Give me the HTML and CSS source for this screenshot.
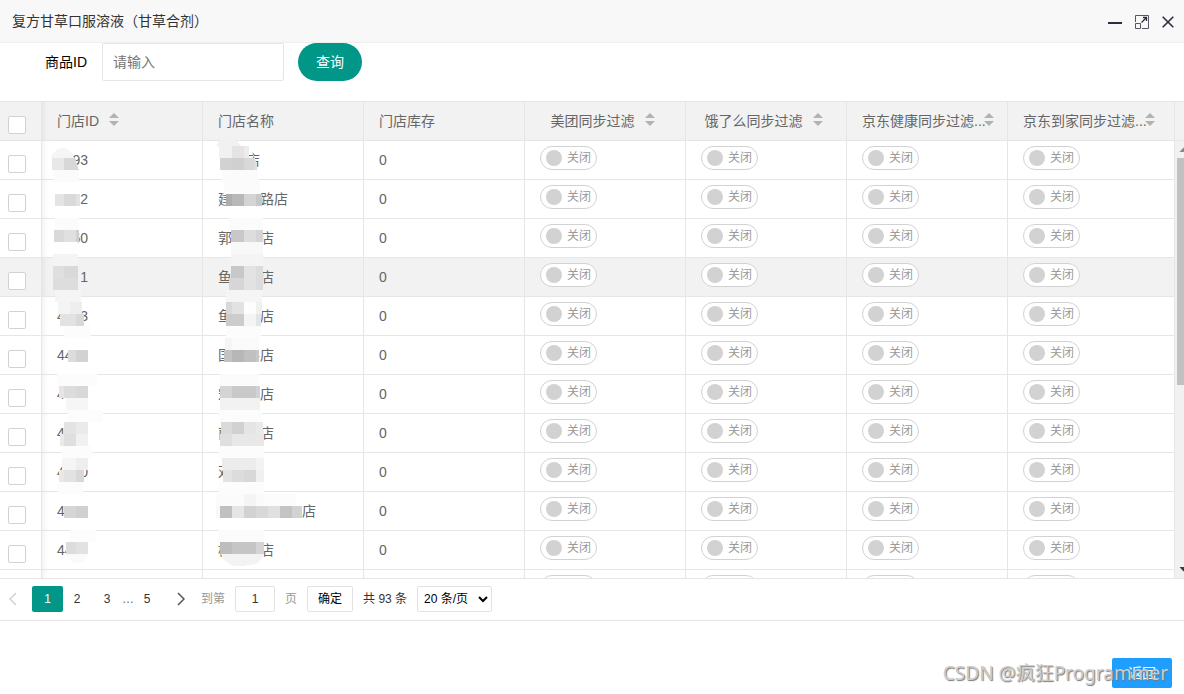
FILE: index.html
```html
<!DOCTYPE html>
<html lang="zh-CN">
<head>
<meta charset="utf-8">
<title>复方甘草口服溶液（甘草合剂）</title>
<link rel="stylesheet" href="styles.css">
</head>
<body>
<header class="titlebar">
  <h1 class="title">复方甘草口服溶液（甘草合剂）</h1>
  <div class="window-actions">
    <button type="button" class="window-btn" aria-label="最小化"><svg width="14" height="14" viewBox="0 0 14 14"><path d="M0 8h14" stroke="#2e2d3c" stroke-width="2"/></svg></button>
    <button type="button" class="window-btn" aria-label="最大化"><svg width="14" height="14" viewBox="0 0 14 14" fill="none" stroke="#2e2d3c"><path d="M.5 7V.5h13v13H7M.5 8.500h5v5h-5z" stroke-opacity=".8"/><path d="M6.500 7.500L11.500 2.500M8 2.500h3.500V6" stroke-width="1.300"/></svg></button>
    <button type="button" class="window-btn" aria-label="关闭"><svg width="12" height="12" viewBox="0 0 12 12"><path d="M.7.7l10.600 10.600M11.300.7L.7 11.300" stroke="#2e2d3c" stroke-width="1.600"/></svg></button>
  </div>
</header>
<form class="search">
  <label class="search-label" for="goods">商品ID</label>
  <input class="search-input" id="goods" type="text" placeholder="请输入">
  <button type="button" class="search-btn">查询</button>
</form>
<main class="grid">
  <table class="table">
    <colgroup><col class="col-check"><col class="col-data"><col class="col-data"><col class="col-data"><col class="col-data"><col class="col-data"><col class="col-data"><col></colgroup>
    <thead>
      <tr>
        <th class="check-cell"><input class="check" type="checkbox" aria-label="全选"></th>
        <th class="first"><span class="head">门店ID<i class="sort"></i></span></th>
        <th><span class="head">门店名称</span></th>
        <th><span class="head">门店库存</span></th>
        <th><span class="head head-center">美团同步过滤<i class="sort"></i></span></th>
        <th><span class="head head-center">饿了么同步过滤<i class="sort"></i></span></th>
        <th><span class="head head-long">京东健康同步过滤...<i class="sort"></i></span></th>
        <th><span class="head head-long">京东到家同步过滤...<i class="sort"></i></span></th>
      </tr>
    </thead>
    <tbody id="rows"></tbody>
  </table>
  <div class="gutter">
    <div class="gutter-head"></div>
    <div class="scrollbar">
      <svg class="arrow" width="17" height="17" viewBox="0 0 17 17"><path d="M4.500 11h8l-4-4.500z" fill="#8a8a8a"/></svg>
      <div class="thumb"></div>
      <svg class="arrow" width="17" height="17" viewBox="0 0 17 17"><path d="M4.500 6h8l-4 4.500z" fill="#404040"/></svg>
    </div>
  </div>
  <svg class="mosaic" id="mosaic" width="340" height="477" viewBox="0 101 340 477" shape-rendering="crispEdges" aria-hidden="true"></svg>
</main>
<nav class="pager" aria-label="分页">
  <a class="page arrow-link"><svg width="8" height="14" viewBox="0 0 8 14"><path d="M7 1L1 7l6 6" fill="none" stroke="#d2d2d2" stroke-width="1.500"/></svg></a>
  <a class="page current" href="#">1</a>
  <a class="page" href="#">2</a>
  <a class="page" href="#">3</a>
  <span class="dots">…</span>
  <a class="page" href="#">5</a>
  <a class="page next" href="#" aria-label="下一页"><svg width="8" height="14" viewBox="0 0 8 14"><path d="M1 1l6 6-6 6" fill="none" stroke="#555" stroke-width="1.500"/></svg></a>
  <label class="muted" for="jump">到第</label>
  <input class="jump" id="jump" type="text" value="1">
  <span class="muted">页</span>
  <button type="button" class="confirm">确定</button>
  <span class="total">共 93 条</span>
  <select class="limit" aria-label="每页条数"><option>20 条/页</option></select>
</nav>
<footer class="footer">
  <button type="button" class="back">返回</button>
  <span class="watermark">CSDN @疯狂Programmer</span>
</footer>
<script src="app.js"></script>
</body>
</html>
```
FILE: styles.css
```css
* { box-sizing: border-box; }
body {
  margin: 0;
  height: 100vh;
  display: flex;
  flex-direction: column;
  overflow: hidden;
  background: #fff;
  color: #333;
  font: 14px/24px "Liberation Sans", "Noto Sans CJK SC", sans-serif;
}
button, input, select { font: inherit; margin: 0; }
a { color: inherit; text-decoration: none; }
.titlebar {
  display: flex;
  align-items: center;
  justify-content: space-between;
  height: 43px;
  padding: 0 10px 0 12px;
  background: #f8f8f8;
  border-bottom: 1px solid #eee;
}
.title { margin: 0; font-size: 14px; font-weight: 400; }
.window-actions { display: flex; align-items: center; gap: 13px; padding-top: 1px; }
.window-btn { display: flex; padding: 0; border: 0; background: none; }
.search { display: flex; align-items: center; padding: 0 0 20px 45px; color: #000; }
.search-label { width: 57px; }
.search-input {
  width: 182px;
  height: 38px;
  padding: 0 10px;
  border: 1px solid #e6e6e6;
  border-radius: 2px;
}
.search-input::placeholder { color: #757575; }
.search-btn {
  height: 38px;
  margin-left: 14px;
  padding: 0 18px;
  border: 0;
  border-radius: 19px;
  background: #009688;
  color: #fff;
}
.grid { position: relative; flex: 1; min-height: 0; display: flex; overflow: hidden; }
.table {
  width: calc(100% - 9px);
  align-self: flex-start;
  table-layout: fixed;
  border-collapse: separate;
  border-spacing: 0;
  color: #666;
}
.col-check { width: 42px; }
.col-data { width: 161px; }
th, td {
  height: 39px;
  padding: 0 15px;
  border-right: 1px solid #e6e6e6;
  border-bottom: 1px solid #e6e6e6;
  font-weight: 400;
  text-align: left;
  white-space: nowrap;
}
th { height: 40px; background: #f2f2f2; border-top: 1px solid #e6e6e6; }
.hover td { background: #f2f2f2; }
.first { box-shadow: inset 6px 0 6px -5px rgba(0, 0, 0, .08); }
.check-cell { padding: 8px 0 0 8px; }
.check {
  appearance: none;
  display: block;
  width: 18px;
  height: 18px;
  border: 1px solid #d2d2d2;
  border-radius: 2px;
  background: #fff;
}
.head { display: flex; align-items: center; gap: 10px; }
.head-center { justify-content: center; padding-right: 5px; }
.head-long { gap: 0; }
.head-long .sort { margin-left: -2px; }
.sort { width: 10px; display: grid; gap: 3px; padding-bottom: 3px; }
.sort::before, .sort::after { content: ""; border: 5px solid transparent; }
.sort::before { border-top: 0; border-bottom-color: #b2b2b2; }
.sort::after { border-bottom: 0; border-top-color: #b2b2b2; }
.switch-cell { padding-bottom: 4px; }
.switch {
  display: flex;
  align-items: center;
  gap: 5px;
  width: 57px;
  height: 24px;
  padding: 0 5px;
  border: 1px solid #d2d2d2;
  border-radius: 12px;
  background: #fff;
  color: #999;
  font-size: 12px;
  line-height: 22px;
}
.switch::before { content: ""; width: 16px; height: 16px; border-radius: 50%; background: #d2d2d2; }
.gutter { width: 9px; display: flex; flex-direction: column; overflow: hidden; }
.gutter-head { height: 40px; background: #f2f2f2; border: solid #e6e6e6; border-width: 1px 0; }
.scrollbar { flex: 1; width: 17px; display: flex; flex-direction: column; background: #f1f1f1; }
.arrow { display: block; flex: none; }
.thumb { height: 56%; max-height: 227px; margin: 0 2px auto; background: #c1c1c1; }
.mosaic { position: absolute; top: 0; left: 0; }
.pager {
  display: flex;
  align-items: center;
  height: 43px;
  padding-bottom: 2px;
  border: solid #e6e6e6;
  border-width: 1px 0;
  font-size: 12px;
}
.page { display: flex; align-items: center; justify-content: center; width: 30px; height: 26px; }
.arrow-link { width: 32px; padding-right: 6px; }
.current { width: 31px; border-radius: 2px; background: #009688; color: #fff; margin-right: -1px; }
.dots { width: 10px; text-align: center; color: #666; }
.next { margin: 0 5px 0 4px; }
.muted { color: #999; }
.jump { width: 40px; height: 26px; margin: 0 10px; padding: 0; border: 1px solid #e2e2e2; border-radius: 2px; text-align: center; color: #333; }
.confirm { height: 26px; margin: 0 10px; padding: 0 10px; border: 1px solid #e2e2e2; border-radius: 2px; background: #fff; color: #000; }
.limit { width: 75px; height: 26px; margin-left: 10px; padding: 0 2px; border: 1px solid #e2e2e2; border-radius: 2px; background: #fff; color: #000; }
.footer { position: relative; display: flex; justify-content: flex-end; padding: 37px 12px 6px; }
.back { width: 60px; height: 30px; padding: 0; border: 0; border-radius: 2px; background: #1e9fff; color: #fff; }
.watermark {
  position: absolute;
  right: 16px;
  bottom: 7px;
  font: 19px/28px "Noto Sans", "Noto Sans CJK SC", sans-serif;
  color: #ccc;
  text-shadow: 1px 1px 1px #777;
}
```
FILE: app.js
```js
// Columns: visible id characters, visible name characters.
const two = "\u00a0\u00a0";
const wide = "\u3000";
const stores = [
  [two + two + "93", wide + wide + "店"],
  [two + two + two + "2", "建" + wide + wide + "路店"],
  [two + two + "60", "郭" + wide + wide + "店"],
  [two + two + two + "1", "鱼" + wide + wide + "店"],
  ["4" + two + two + "3", "鱼" + wide + wide + "店"],
  ["44", "国" + wide + "路店"],
  ["4", "宋" + wide + wide + "店"],
  ["4", "南" + wide + wide + "店"],
  ["4" + two + two + "0", "邓"],
  ["4", wide.repeat(6) + "店"],
  ["44", "杨" + wide + wide + "店"],
  ["", ""]
];
const toggle = '<td class="switch-cell"><button type="button" class="switch" role="switch" aria-checked="false">关闭</button></td>';
document.getElementById("rows").innerHTML = stores.map(([id, name], i) =>
  `<tr class="${i === 3 ? "hover" : ""}"><td class="check-cell"><input class="check" type="checkbox" aria-label="选择"></td>` +
  `<td class="first">${id}</td><td>${name}</td><td>${i < 11 ? "0" : ""}</td>${toggle.repeat(4)}</tr>`).join("");

// Pixelated bands over the private values: top, height, left, then [right, gray] steps.
const bands = [
  [158,12,52,64,"e8",75,"d8"],[170,12,54,79,"fb"],
  [194,12,55,64,"e4",76,"d9",80,"e2"],[218,12,55,79,"fb"],
  [230,12,54,64,"d9",76,"e0",79,"d0"],[242,12,54,78,"fe"],[254,12,53,78,"f4"],
  [266,12,53,64,"df",78,"d9"],[278,12,53,78,"dd"],[290,12,55,81,"f5"],
  [302,12,58,70,"f4",82,"ee"],[314,12,60,76,"e2",84,"d9"],[326,12,64,91,"fc"],
  [350,12,68,76,"dc",88,"d2"],[374,12,57,97,"fc"],[386,12,59,64,"e5",76,"dc",88,"d8"],
  [398,12,66,88,"f6"],[410,12,68,103,"fc"],[422,12,64,76,"e3",88,"ea"],
  [434,12,60,64,"ea",76,"df",88,"f1"],[446,12,62,92,"fc"],[458,12,62,76,"f5",88,"ee"],
  [470,12,59,64,"e8",76,"e2",84,"d8"],[482,12,58,83,"fc"],[506,12,64,76,"d6",88,"d0"],
  [530,12,70,96,"fc"],[542,12,66,76,"dc",88,"e2"],
  [146,12,219,232,"f1",244,"e4",249,"ec"],[158,12,220,232,"d2",244,"d0",254,"d8"],
  [170,12,222,258,"fb"],[182,12,224,260,"fb"],[194,12,226,232,"ad",244,"b8",256,"d4",262,"c8"],
  [218,12,229,263,"fb"],[230,12,231,244,"c8",256,"dd",263,"d5"],[242,12,231,263,"f8"],[254,12,231,263,"f4"],
  [266,12,231,244,"c8",256,"e3",263,"dc"],[278,12,229,244,"d6",256,"e2",263,"dc"],[290,12,226,262,"f5"],
  [302,12,226,232,"d8",244,"e2",256,"fd",262,"f0"],[314,12,226,244,"cc",256,"f4",261,"e5"],
  [326,12,226,261,"fc"],[338,12,225,232,"f5",259,"fa"],[350,12,224,232,"c3",244,"b7",256,"c0",259,"c8"],
  [374,12,220,259,"fb"],[386,12,220,232,"d4",256,"c9",260,"d2"],[398,12,220,260,"f2"],[410,12,219,262,"fc"],
  [422,12,221,232,"da",244,"d1",256,"e5",263,"ea"],[434,12,220,232,"df",264,"e8"],[446,12,219,264,"fc"],
  [458,12,222,256,"ec",264,"f3"],[470,12,223,232,"e3",244,"dc",256,"d8",264,"f0"],[482,12,219,264,"fc"],
  [494,12,216,244,"fb",256,"f4",264,"fa",296,"fc"],
  [506,12,216,220,"f8",232,"c0",244,"e6",256,"d2",268,"d8",280,"e0",292,"c4",302,"d2"],
  [530,12,218,264,"fb"],[542,12,220,232,"bd",256,"c5",264,"d4"]
];
let art = '<path d="M51 158a12 14 0 0 1 23 0z" fill="#f5f5f5"/><path d="M74 158h1l4 12h-5z" fill="#d8d8d8"/><path d="M216 146q4-8 12-8q8 0 13 8z" fill="#f1f1f1"/><path d="M247 146q5 3 7 12v12h3v-5q-4-16-10-19z" fill="#dedede"/><path d="M66 554h22q-2 9-11 9q-8 0-11-9z" fill="#fafafa"/><path d="M221 554h43q-3 11-16 11q-6 2-13 1q-10-2-14-12z" fill="#f3f3f3"/>';
for (const [top, height, left, ...steps] of bands) {
  let x = left;
  for (let i = 0; i < steps.length; i += 2) {
    art += `<rect x="${x}" y="${top}" width="${steps[i] - x}" height="${height}" fill="#${steps[i + 1].repeat(3)}"/>`;
    x = steps[i];
  }
}
document.getElementById("mosaic").innerHTML = art;
```
